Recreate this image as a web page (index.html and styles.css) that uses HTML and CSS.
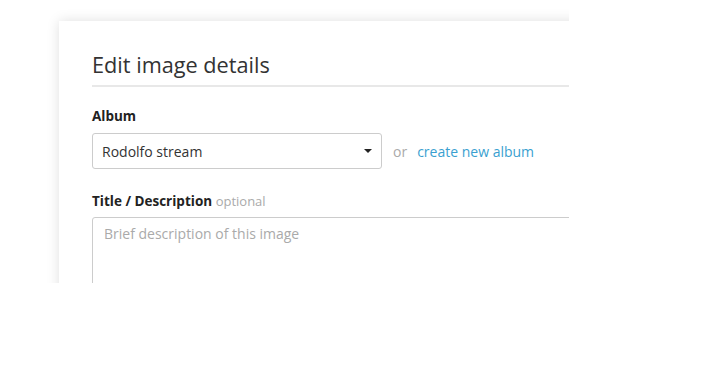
FILE: index.html
```html
<!DOCTYPE html>
<html lang="en">
<head>
  <meta charset="UTF-8">
  <title>Edit image details</title>
  <link rel="stylesheet" href="styles.css">
</head>
<body>
  <div class="shot">
    <div class="card">
      <h1 class="card-title">Edit image details</h1>

      <div class="field album-field">
        <label class="field-label">Album</label>
        <div class="album-row">
          <div class="select">
            <span>Rodolfo stream</span>
            <span class="caret"></span>
          </div>
          <span class="or">or</span>
          <a href="#" class="new-album">create new album</a>
        </div>
      </div>

      <div class="field desc-field">
        <label class="field-label">Title / Description <span class="hint">optional</span></label>
        <div class="textarea">Brief description of this image</div>
      </div>
    </div>
  </div>
</body>
</html>
```

FILE: styles.css
```css
* { margin: 0; padding: 0; box-sizing: border-box; }
body {
  background: #fff;
  font-family: 'Open Sans', sans-serif;
  color: #333;
}
/* cropped screenshot of the dialog */
.shot {
  margin-left: 40px;
  width: 529px;
  height: 283px;
  overflow: hidden;
  padding: 21px 0 0 19px;
}
.card {
  width: 700px;
  height: 400px;
  background: #fff;
  box-shadow: 0 0 12px rgba(0,0,0,0.13);
  padding: 28px 0 0 33px;
}
.card-title {
  font-size: 21.7px;
  font-weight: 400;
  line-height: 32px;
  color: #333;
  padding-bottom: 4px;
  border-bottom: 2px solid #e8e8e8;
  margin-bottom: 20px;
}
.field { margin-bottom: 20px; }
.album-field { margin-bottom: 23px; }
.field-label {
  display: block;
  font-size: 13.5px;
  font-weight: 700;
  line-height: 18px;
  color: #222;
  margin-bottom: 8px;
}
.desc-field .field-label { margin-bottom: 7px; }
.hint {
  font-size: 13px;
  font-weight: 400;
  color: #aaa;
}
.album-row {
  display: flex;
  align-items: center;
}
.select {
  width: 290px;
  height: 36px;
  border: 1px solid #ccc;
  border-radius: 3px;
  display: flex;
  align-items: center;
  justify-content: space-between;
  padding: 0 9px 0 9px;
  font-size: 14px;
  color: #333;
}
.caret {
  width: 0;
  height: 0;
  border-left: 4px solid transparent;
  border-right: 4px solid transparent;
  border-top: 4px solid #222;
}
.or {
  font-size: 14px;
  color: #aaa;
  margin: 0 10px 0 11px;
}
.new-album {
  font-size: 14px;
  color: #3a9fd0;
  text-decoration: none;
}
.textarea {
  height: 90px;
  border: 1px solid #ccc;
  border-radius: 3px;
  padding: 6px 11px;
  font-size: 14px;
  color: #aaa;
}
```
